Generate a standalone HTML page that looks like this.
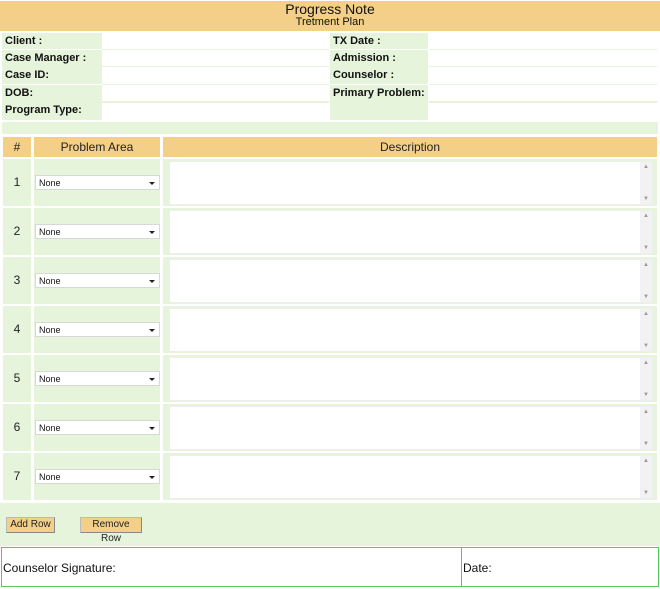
<!DOCTYPE html>
<html><head><style>
*{margin:0;padding:0;box-sizing:border-box}
body{width:660px;height:589px;background:#fff;position:relative;font-family:"Liberation Sans",Arial,sans-serif;overflow:hidden}
.a{position:absolute}
.or{background:#f4cf88}
.gr{background:#e6f4dc}
.lb{font-weight:bold;font-size:11px;color:#111;padding-left:3px;line-height:16px}
.val{background:#fff;border-bottom:2px solid #e6f4dc}
.num{font-size:12px;color:#222;text-align:center}
.sel{background:#fff;border:1px solid #d8d8d8;font-size:9px;line-height:14px;padding-left:3px;color:#111}
.sel:after{content:"";position:absolute;right:4px;top:6px;border-left:3px solid transparent;border-right:3px solid transparent;border-top:3px solid #222}
.ta{background:#fff;border:1px solid #eee}
.sb{position:absolute;right:0;top:0;bottom:0;width:12px;background:#f2f2f2;font-size:6px;color:#999;text-align:center}
.btn{background:#f4cf88;border:1px solid #bbb;border-right-color:#888;border-bottom-color:#888;font-size:10px;text-align:center;line-height:14px;color:#222}
</style></head><body>
<div class="a or" style="left:0;top:1px;width:660px;height:30px"></div>
<div class="a" style="left:0;top:2px;width:660px;text-align:center;font-size:14px;line-height:15px;color:#111">Progress Note</div>
<div class="a" style="left:0;top:16px;width:660px;text-align:center;font-size:11px;line-height:13px;color:#111">Tretment Plan</div>

<div class="a gr lb" style="left:2px;top:33px;width:100px;height:16px">Client :</div>
<div class="a gr lb" style="left:2px;top:50px;width:100px;height:17px">Case Manager :</div>
<div class="a gr lb" style="left:2px;top:67px;width:100px;height:17px">Case ID:</div>
<div class="a gr lb" style="left:2px;top:85px;width:100px;height:17px">DOB:</div>
<div class="a gr lb" style="left:2px;top:102px;width:100px;height:18px">Program Type:</div>
<div class="a val" style="left:102px;top:32px;width:227px;height:19px"></div>
<div class="a val" style="left:102px;top:50px;width:227px;height:18px"></div>
<div class="a val" style="left:102px;top:67px;width:227px;height:19px"></div>
<div class="a val" style="left:102px;top:85px;width:227px;height:18px"></div>
<div class="a" style="left:102px;top:103px;width:227px;height:18px;background:#fff"></div>

<div class="a gr lb" style="left:330px;top:33px;width:98px;height:16px">TX Date :</div>
<div class="a gr lb" style="left:330px;top:50px;width:98px;height:17px">Admission :</div>
<div class="a gr lb" style="left:330px;top:67px;width:98px;height:17px">Counselor :</div>
<div class="a gr lb" style="left:330px;top:85px;width:98px;height:17px">Primary Problem:</div>
<div class="a gr lb" style="left:330px;top:102px;width:98px;height:18px"></div>
<div class="a val" style="left:429px;top:32px;width:228px;height:19px"></div>
<div class="a val" style="left:429px;top:50px;width:228px;height:18px"></div>
<div class="a val" style="left:429px;top:67px;width:228px;height:19px"></div>
<div class="a val" style="left:429px;top:85px;width:228px;height:18px"></div>
<div class="a" style="left:429px;top:103px;width:228px;height:18px;background:#fff"></div>

<div class="a gr" style="left:2px;top:122px;width:656px;height:12px"></div>

<div class="a or num" style="left:3px;top:137px;width:28px;height:20px;line-height:20px">#</div>
<div class="a or num" style="left:34px;top:137px;width:126px;height:20px;line-height:20px">Problem Area</div>
<div class="a or num" style="left:163px;top:137px;width:494px;height:20px;line-height:20px">Description</div>

<div id="rows"></div>
<script>
var h='';
for(var i=0;i<7;i++){var y=159+i*49;
h+='<div class="a gr num" style="left:3px;top:'+y+'px;width:28px;height:47px;line-height:47px">'+(i+1)+'</div>';
h+='<div class="a gr" style="left:34px;top:'+y+'px;width:126px;height:47px"></div>';
h+='<div class="a sel" style="left:35px;top:'+(y+16)+'px;width:125px;height:15px">None</div>';
h+='<div class="a gr" style="left:163px;top:'+y+'px;width:494px;height:47px"></div>';
h+='<div class="a ta" style="left:169px;top:'+(y+2)+'px;width:484px;height:44px"><div class="sb"><div style="margin-top:2px">▲</div><div style="position:absolute;bottom:2px;width:12px">▼</div></div></div>';}
document.getElementById('rows').outerHTML=h;
</script>

<div class="a gr" style="left:0;top:503px;width:660px;height:43px"></div>
<div class="a btn" style="left:6px;top:517px;width:49px;height:16px">Add Row</div>
<div class="a btn" style="left:80px;top:517px;width:62px;height:16px">Remove Row</div>

<div class="a" style="left:1px;top:547px;width:658px;height:40px;border:1px solid #55cc55"></div>
<div class="a" style="left:461px;top:547px;width:1px;height:40px;background:#55cc55"></div>
<div class="a" style="left:3px;top:561px;font-size:12px;color:#111">Counselor Signature:</div>
<div class="a" style="left:463px;top:561px;font-size:12px;color:#111">Date:</div>
</body></html>
